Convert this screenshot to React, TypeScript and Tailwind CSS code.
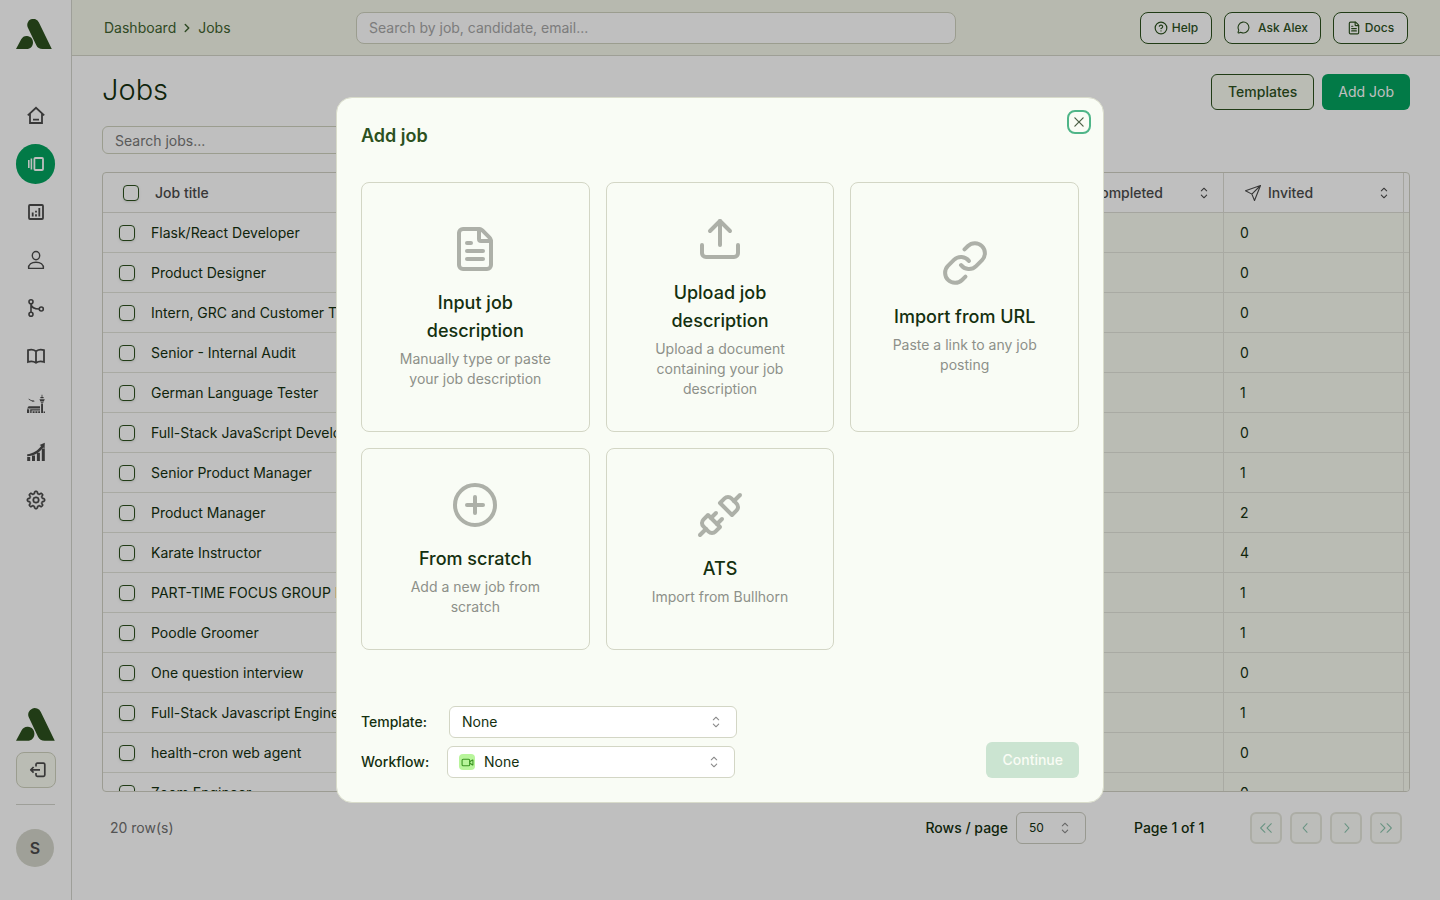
import React from "react";
import { ChevronRight, CircleHelp, CirclePlus, FileText, Link, MessageCircle, Unplug, Upload, Video } from "lucide-react";
import { GoGear } from "react-icons/go";
import { RxCaretSort, RxChevronLeft, RxChevronRight, RxCross2, RxDoubleArrowLeft, RxDoubleArrowRight } from "react-icons/rx";

const Logo = ({ style }: { style: string }) => (
  <svg className={style} viewBox="0 0 36 30" fill="#2c511e">
    <path d="M11.8 8.4A6 6 0 0 1 22.9 3.4L35.8 30H26.5C23.5 30 21.5 28.8 20.3 26.3Z" />
    <path d="M0 30L5.2 20.3C6.5 18 8.5 16.8 11 17C14.8 17.3 17 20 17 23.5C17 27.3 14.5 30 10.5 30Z" />
  </svg>
);

const HomeIcon = () => (
  <svg width="20" height="20" viewBox="0 0 20 20" fill="none" stroke="currentColor" strokeWidth="1.8">
    <path d="M1.8 9.4L10 1.8L18.2 9.4M4 7.6V17H16V7.6M7 13.6H13" />
  </svg>
);

const JobsIcon = () => (
  <svg width="20" height="20" viewBox="0 0 20 20" fill="none" stroke="currentColor" strokeWidth="1.8">
    <rect x="8.4" y="4" width="8.6" height="12" rx="1" />
    <path d="M5.4 4.5V15.5M2.8 6V14" strokeWidth="1.6" />
  </svg>
);

const ChartIcon = () => (
  <svg width="20" height="20" viewBox="0 0 20 20" fill="none" stroke="currentColor" strokeWidth="1.8">
    <rect x="3" y="3" width="14" height="14" rx="1" />
    <path d="M6.7 10.5V14.5M10 12.2V14.5M10 8.8V10.6M13.3 6V14.5" />
  </svg>
);

const UserIcon = () => (
  <svg width="20" height="20" viewBox="0 0 20 20" fill="none" stroke="currentColor" strokeWidth="1.4">
    <ellipse cx="10" cy="5.6" rx="3.7" ry="4.1" />
    <path d="M2.6 18.4C2.2 14.4 5.6 12.2 10 12.2C14.4 12.2 17.8 14.4 17.4 18.4Z" strokeLinejoin="round" />
  </svg>
);

const BranchIcon = () => (
  <svg width="20" height="20" viewBox="0 0 20 20" fill="none" stroke="currentColor" strokeWidth="1.6">
    <circle cx="5" cy="3.8" r="2" />
    <circle cx="5" cy="16.2" r="2" />
    <circle cx="15.3" cy="11" r="2" />
    <path d="M5 5.8V14.2M5 5.8C5.4 9.2 8.6 11 13.3 11" />
  </svg>
);

const BookIcon = () => (
  <svg width="20" height="20" viewBox="0 0 20 20" fill="none" stroke="currentColor" strokeWidth="1.8">
    <path d="M10 5.2C7.6 3.5 4.6 3.3 2 4.2V16C4.6 15 7.6 15.2 10 16.8C12.4 15.2 15.4 15 18 16V4.2C15.4 3.3 12.4 3.5 10 5.2ZM10 5.2V16.8" />
  </svg>
);

const AirportIcon = () => (
  <svg width="20" height="20" viewBox="0 0 20 20" fill="currentColor">
    <path d="M1 14.4L2.6 12.2H14V14.6H1ZM1 15.2H3.2V19H1ZM4.2 15.2H14V16.6H5.6V19H4.2ZM6.6 17.2H8.6V19H6.6ZM9.4 17.2H11.4V19H9.4ZM12.2 17.2H14V19H12.2Z" />
    <path d="M15.1 9.4H17V19H15.1ZM13.4 5.2H18.8L17.8 7.6H14.4ZM14.8 8.2H17.4V9H14.8ZM14.4 3H17.6V4.2H14.4ZM15.6 .8H16.4V3H15.6ZM17.6 17.4H19V19H17.6Z" />
    <path d="M2.4 4.4L5.4 6.2L8 6.4L8.6 7.6L6.6 7.8L3 5.8Z" />
  </svg>
);

const GrowthIcon = () => (
  <svg width="20" height="20" viewBox="0 0 20 20" fill="currentColor">
    <path d="M1.2 15H4.2V19H1.2ZM6 13.4H9V19H6ZM10.9 10.8H13.9V19H10.9ZM15.8 6.6H18.8V19H15.8Z" />
    <path d="M1.2 12.2C7 11.8 12 8.4 15.2 4L13.6 3L18.8 .8L18.6 6.4L17.2 5.4C13.6 10.4 8 14 1.2 14.2Z" />
  </svg>
);

const SendIcon = () => (
  <svg width="18" height="18" viewBox="0 0 24 24" fill="none" stroke="currentColor" strokeWidth="1.5" strokeLinejoin="round">
    <path d="M22 2L14 22L10.5 13.5L2 9ZM22 2L10.5 13.5" />
  </svg>
);

const LogoutIcon = () => (
  <svg width="18" height="18" viewBox="0 0 18 18" fill="none" stroke="currentColor" strokeWidth="1.7" strokeLinejoin="round">
    <path d="M7 5.5V3.5C7 2.7 7.5 2.2 8.3 2.2H14.5C15.3 2.2 15.8 2.7 15.8 3.5V14C15.8 14.8 15.3 15.3 14.5 15.3H8.3C7.5 15.3 7 14.8 7 14V12M11 8.8H2M4.6 6L1.8 8.8L4.6 11.6" />
  </svg>
);

const navItems = [
  { name: "Home", icon: <HomeIcon /> },
  { name: "Jobs", icon: <JobsIcon />, active: true },
  { name: "Reports", icon: <ChartIcon /> },
  { name: "Candidates", icon: <UserIcon /> },
  { name: "Workflows", icon: <BranchIcon /> },
  { name: "Library", icon: <BookIcon /> },
  { name: "Terminal", icon: <AirportIcon /> },
  { name: "Growth", icon: <GrowthIcon /> },
  { name: "Settings", icon: <GoGear size={20} stroke="currentColor" strokeWidth={0.6} /> },
];

const jobs = [
  { title: "Flask/React Developer", invited: 0 },
  { title: "Product Designer", invited: 0 },
  { title: "Intern, GRC and Customer Trust", invited: 0 },
  { title: "Senior - Internal Audit", invited: 0 },
  { title: "German Language Tester", invited: 1 },
  { title: "Full-Stack JavaScript Developer", invited: 0 },
  { title: "Senior Product Manager", invited: 1 },
  { title: "Product Manager", invited: 2 },
  { title: "Karate Instructor", invited: 4 },
  { title: "PART-TIME FOCUS GROUP PANELIST", invited: 1 },
  { title: "Poodle Groomer", invited: 1 },
  { title: "One question interview", invited: 0 },
  { title: "Full-Stack Javascript Engineer", invited: 1 },
  { title: "health-cron web agent", invited: 0 },
  { title: "Zoom Engineer", invited: 0 },
];

const options = [
  { title: "Input job description", text: "Manually type or paste your job description", Icon: FileText },
  { title: "Upload job description", text: "Upload a document containing your job description", Icon: Upload },
  { title: "Import from URL", text: "Paste a link to any job posting", Icon: Link },
  { title: "From scratch", text: "Add a new job from scratch", Icon: CirclePlus },
  { title: "ATS", text: "Import from Bullhorn", Icon: Unplug },
];

const pagers = [
  { name: "First page", Icon: RxDoubleArrowLeft },
  { name: "Previous page", Icon: RxChevronLeft },
  { name: "Next page", Icon: RxChevronRight },
  { name: "Last page", Icon: RxDoubleArrowRight },
];

const Checkbox = ({ label }: { label: string }) => (
  <input
    type="checkbox"
    aria-label={label}
    className="block size-4 shrink-0 appearance-none rounded border border-[#2c511e] shadow-sm"
  />
);

const Sidebar = () => {
  return (
    <aside className="flex w-18 shrink-0 flex-col border-r border-[#d3d4cd] px-4">
      <Logo style="mt-[19px] h-[30px] w-9" />
      <nav className="mt-[47px] flex flex-col gap-2">
        {navItems.map((item) => (
          <a
            key={item.name}
            href="#"
            aria-label={item.name}
            className={`flex h-10 items-center justify-center rounded-full ${
              item.active ? "bg-[#03a35f] text-white" : "text-[#4b4b4b]"
            }`}
          >
            {item.icon}
          </a>
        ))}
      </nav>
      <div className="mt-auto flex flex-col pb-[33px]">
        <Logo style="h-[33px] w-[39px]" />
        <button
          aria-label="Log out"
          className="mt-[11px] flex h-9 w-10 items-center justify-center rounded-lg border border-[#cfd2bf] bg-[#f9fbf1] pl-1 text-[#4b4b4b]"
        >
          <LogoutIcon />
        </button>
        <div className="mt-4 h-px bg-[#d3d4cd]" />
        <div className="mt-6 flex size-[38px] items-center justify-center rounded-full bg-[#d5d6cb] font-semibold text-[#4b4b4b]">
          S
        </div>
      </div>
    </aside>
  );
};

const TopBar = () => {
  const button =
    "flex h-8 items-center justify-center rounded-lg border border-[#2c511e] bg-white text-xs font-medium text-[#2c511e]";
  return (
    <header className="flex h-14 shrink-0 items-center border-b border-[#d3d4c8] bg-[#f5f7ea] px-8 text-sm">
      <nav className="flex w-[252px] items-center gap-1 text-[#3f6330]">
        <a href="#">Dashboard</a>
        <ChevronRight size={14} strokeWidth={2.5} />
        <a href="#">Jobs</a>
      </nav>
      <input
        type="text"
        aria-label="Search"
        placeholder="Search by job, candidate, email..."
        className="h-8 w-[600px] min-w-0 rounded-lg border border-[#cfd2bf] bg-white px-3 placeholder:text-[#a6a6a6]"
      />
      <div className="ml-auto flex gap-3">
        <button className={`${button} w-18 gap-1`}>
          <CircleHelp size={14} />
          Help
        </button>
        <button className={`${button} w-[97px] gap-2`}>
          <MessageCircle size={13} />
          Ask Alex
        </button>
        <button className={`${button} w-[75px] gap-1`}>
          <FileText size={14} />
          Docs
        </button>
      </div>
    </header>
  );
};

const JobsTable = () => {
  return (
    <div className="mt-[18px] min-h-0 flex-1 overflow-hidden rounded border border-[#d0d1c4]">
      <table className="w-full table-fixed border-separate border-spacing-0 text-left text-sm">
        <thead>
          <tr className="h-10 text-[#4b4b4b] *:border-b *:border-[#dcddd5] *:font-medium">
            <th>
              <div className="flex items-center gap-4 pl-5">
                <Checkbox label="Select all jobs" />
                Job title
              </div>
            </th>
            <th className="w-[220px] border-r pr-[10px]">
              <div className="flex items-center justify-end">
                <span className="mr-8">Completed</span>
                <RxCaretSort size={18} />
              </div>
            </th>
            <th className="w-[180px] border-r pr-[10px] pl-5">
              <div className="flex items-center gap-[6px]">
                <SendIcon />
                Invited
                <RxCaretSort size={18} className="ml-auto" />
              </div>
            </th>
            <th className="w-[5px]" />
          </tr>
        </thead>
        <tbody>
          {jobs.map((job) => (
            <tr key={job.title} className="h-10 text-[#14300f] *:border-b *:border-[#e2e3da]">
              <td>
                <div className="flex items-center gap-4 pl-4">
                  <Checkbox label={`Select ${job.title}`} />
                  {job.title}
                </div>
              </td>
              <td className="border-r bg-[#f9fbf1]" />
              <td className="border-r bg-[#f9fbf1] px-4">{job.invited}</td>
              <td className="bg-[#f9fbf1]" />
            </tr>
          ))}
        </tbody>
      </table>
    </div>
  );
};

const Pagination = () => {
  return (
    <div className="mt-5 flex h-8 items-center px-2 text-sm font-medium text-[#14300f]">
      <span className="font-normal text-[#707070]">20 row(s)</span>
      <label htmlFor="rows" className="ml-auto">
        Rows / page
      </label>
      <div className="relative ml-2">
        <select
          id="rows"
          className="h-8 w-[70px] appearance-none rounded-md border border-[#cbccc0] px-3 text-xs font-normal"
        >
          <option>50</option>
        </select>
        <RxCaretSort size={18} className="pointer-events-none absolute top-[7px] right-3 text-[#8a8a8a]" />
      </div>
      <span className="ml-12 w-[116px]">Page 1 of 1</span>
      <div className="flex gap-2">
        {pagers.map(({ name, Icon }) => (
          <button
            key={name}
            disabled
            aria-label={name}
            className="flex size-8 items-center justify-center rounded-md border-2 border-[#e6e7dd] bg-[#fbfcf8] text-[#8bc5ae]"
          >
            <Icon size={16} />
          </button>
        ))}
      </div>
    </div>
  );
};

const AddJobDialog = () => {
  const select = "h-8 w-72 appearance-none rounded-md border border-[#d3d6c5] bg-white text-sm font-normal";
  return (
    <div className="fixed inset-0 flex items-center justify-center bg-black/25">
      <div
        role="dialog"
        aria-labelledby="dialog-title"
        className="relative w-full max-w-3xl rounded-2xl border border-[#d9dccb] bg-[#f9fcf5] p-6"
      >
        <h2 id="dialog-title" className="text-lg leading-7 font-semibold text-[#2c511e]">
          Add job
        </h2>
        <button
          aria-label="Close"
          className="absolute top-3 right-3 flex size-6 items-center justify-center rounded-lg border-2 border-[#4fb588] text-[#4b5f45]"
        >
          <RxCross2 size={16} />
        </button>
        <div className="mt-8 grid grid-cols-3 gap-4">
          {options.map(({ title, text, Icon }) => (
            <button
              key={title}
              className="flex flex-col items-center justify-center rounded-lg border border-[#d3d6c5] p-8 text-center"
            >
              <Icon size={48} className="text-[#adb0a8]" />
              <span className="mt-4 text-lg leading-7 font-medium text-[#14300f]">{title}</span>
              <span className="mt-1 text-sm leading-5 text-[#8d9089]">{text}</span>
            </button>
          ))}
        </div>
        <div className="mt-14 flex items-end justify-between">
          <div className="flex flex-col gap-2 text-sm font-medium text-[#14300f]">
            <div className="flex items-center">
              <label htmlFor="template" className="w-22">
                Template:
              </label>
              <div className="relative">
                <select id="template" className={`${select} px-3`}>
                  <option>None</option>
                </select>
                <RxCaretSort size={18} className="pointer-events-none absolute top-[7px] right-3 text-[#8a8a8a]" />
              </div>
            </div>
            <div className="flex items-center">
              <label htmlFor="workflow" className="w-[86px]">
                Workflow:
              </label>
              <div className="relative">
                <select id="workflow" className={`${select} pr-3 pl-9`}>
                  <option>None</option>
                </select>
                <span className="pointer-events-none absolute top-2 left-3 flex size-4 items-center justify-center rounded bg-[#b8f59b] text-[#3a9422]">
                  <Video size={13} />
                </span>
                <RxCaretSort size={18} className="pointer-events-none absolute top-[7px] right-3 text-[#8a8a8a]" />
              </div>
            </div>
          </div>
          <button disabled className="h-9 rounded-md bg-[#cbe4d1] px-4 text-sm font-medium text-[#f9fcf5]">
            Continue
          </button>
        </div>
      </div>
    </div>
  );
};

const App = () => {
  return (
    <div className="flex h-screen bg-white font-['Inter','Liberation_Sans',sans-serif] text-[#14300f]">
      <Sidebar />
      <div className="flex min-w-0 flex-1 flex-col">
        <TopBar />
        <main className="flex min-h-0 flex-1 flex-col pt-[18px] pr-[30px] pb-14 pl-[30px]">
          <div className="flex items-start justify-between">
            <h1 className="text-[29px] leading-8 font-light">Jobs</h1>
            <div className="flex gap-2 text-sm font-medium">
              <button className="h-9 rounded-md border border-[#2c511e] bg-[#f9fbf1] px-4 text-[#2c511e]">
                Templates
              </button>
              <button className="h-9 rounded-md bg-[#03a35f] px-4 font-normal text-white">Add Job</button>
            </div>
          </div>
          <input
            type="text"
            aria-label="Search jobs"
            placeholder="Search jobs..."
            className="mt-4 h-7 w-80 shrink-0 rounded-md border border-[#cfd2bf] px-3 text-sm placeholder:text-[#787878]"
          />
          <JobsTable />
          <Pagination />
        </main>
      </div>
      <AddJobDialog />
    </div>
  );
};

export default App;
